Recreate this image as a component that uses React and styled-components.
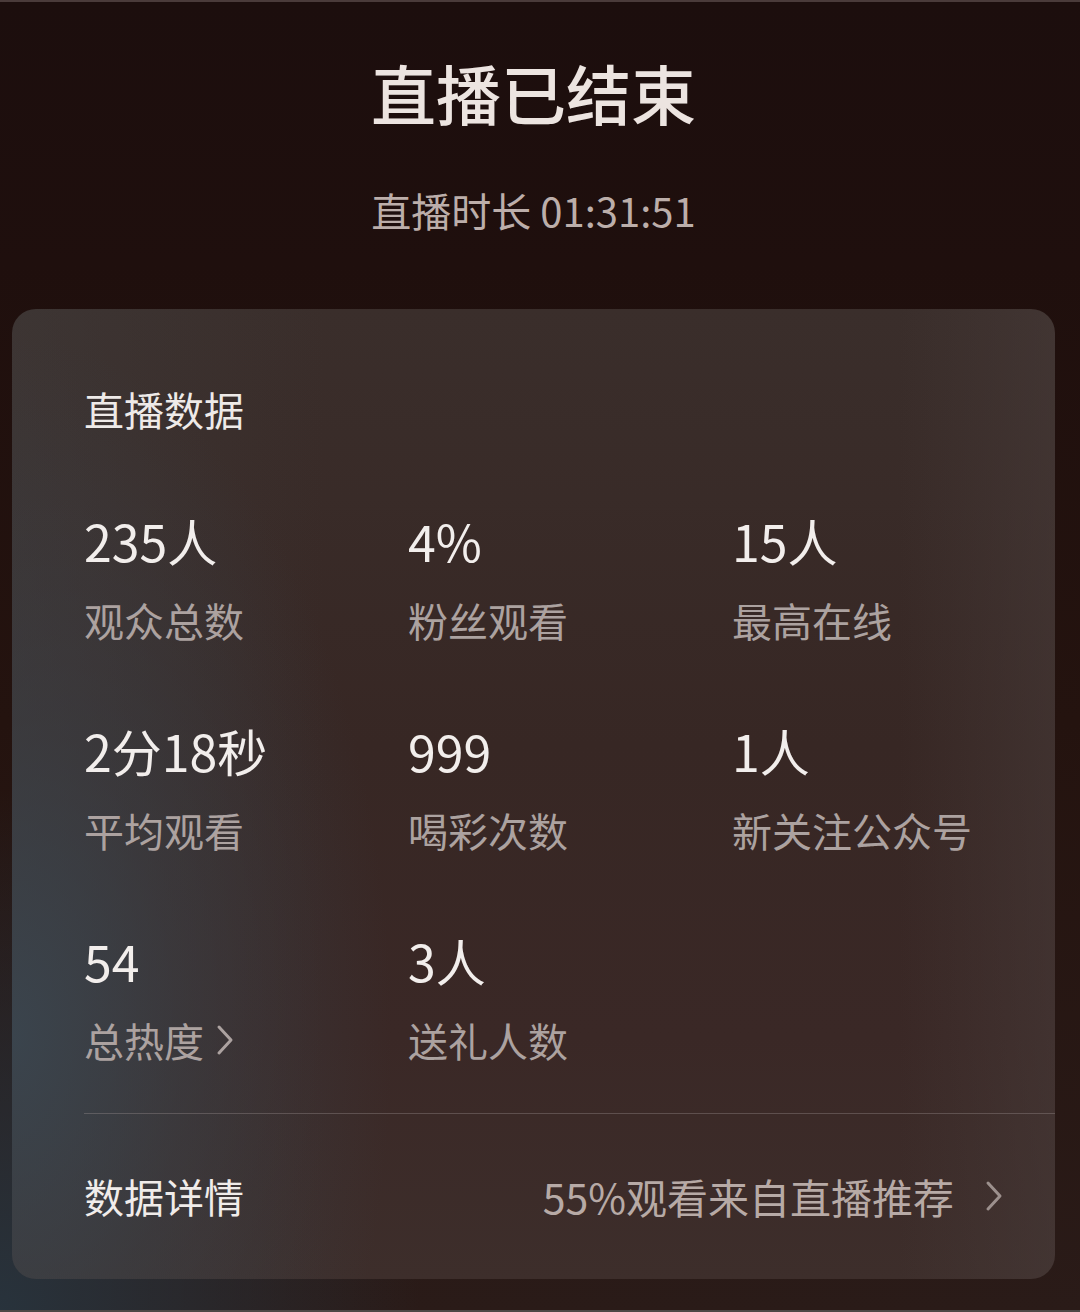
import React from "react";
import styled, { createGlobalStyle } from "styled-components";

const Global = createGlobalStyle`
  html, body { margin: 0; padding: 0; background: #1d0f0e; }
  body { font-family: "Noto Sans CJK SC", "Noto Sans", sans-serif; }
  * { box-sizing: border-box; }
`;

const Page = styled.div`
  width: 1080px;
  height: 1312px;
  overflow: hidden;
  display: flex;
  flex-direction: column;
  align-items: center;
  padding: 58px 25px 0 12px;
  border-top: 2px solid #4a3b3a;
  border-bottom: 2px solid #4e4846;
  background:
    radial-gradient(ellipse 420px 520px at 0% 100%, rgba(40, 52, 62, 0.95), rgba(40, 52, 62, 0) 100%),
    linear-gradient(180deg, #1c0e0d 0%, #1f0f0d 20%, #24130f 55%, #2a1b18 100%);
`;

const Title = styled.h1`
  margin: 0;
  font-size: 65px;
  line-height: 64px;
  font-weight: 500;
  color: #ece4e0;
`;

const Duration = styled.div`
  margin-top: 66px;
  font-size: 40px;
  line-height: 40px;
  color: #bcaeaa;
`;

const Card = styled.section`
  margin-top: 79px;
  width: 1043px;
  height: 970px;
  border-radius: 24px;
  padding: 80px 0 0 72px;
  display: flex;
  flex-direction: column;
  background:
    radial-gradient(ellipse 380px 700px at 0% 75%, rgba(58, 70, 80, 0.9) 0%, rgba(58, 66, 74, 0.5) 45%, rgba(58, 60, 64, 0) 100%),
    linear-gradient(90deg, rgba(64, 62, 62, 0.45) 0%, rgba(60, 50, 48, 0) 30%, rgba(60, 50, 48, 0) 85%, rgba(72, 60, 58, 0.5) 100%),
    linear-gradient(180deg, #3a2e2b 0%, #372724 45%, #3a2826 75%, #3d2e2b 100%);
`;

const SectionTitle = styled.h2`
  margin: 0;
  font-size: 40px;
  line-height: 40px;
  font-weight: 400;
  color: #eeeae8;
`;

const Grid = styled.div`
  margin-top: 88px;
  display: grid;
  grid-template-columns: repeat(3, 324px);
  row-gap: 87px;
`;

const Stat = styled.div`
  display: flex;
  flex-direction: column;
`;

const Value = styled.div`
  font-size: 50px;
  line-height: 46px;
  color: #f2eeec;
  font-weight: 400;
  white-space: nowrap;
`;

const Label = styled.div`
  margin-top: 37px;
  font-size: 40px;
  line-height: 40px;
  color: #aca2a0;
  display: flex;
  align-items: center;
  gap: 12px;
`;

const Divider = styled.div`
  margin-top: 53px;
  height: 1px;
  background: rgba(160, 150, 148, 0.35);
`;

const Footer = styled.div`
  margin-top: 62px;
  display: flex;
  align-items: center;
  justify-content: space-between;
  padding-right: 52px;
`;

const FooterTitle = styled.div`
  font-size: 40px;
  line-height: 40px;
  color: #f0ecea;
`;

const FooterLink = styled.div`
  display: flex;
  align-items: center;
  gap: 31px;
  font-size: 41px;
  line-height: 40px;
  color: #b7aaa6;
`;

const Chevron = ({ color = "#aca2a0", w = 18, h = 32 }) => (
  <svg width={w} height={h} viewBox="0 0 18 32" fill="none">
    <path d="M3 3 L15 16 L3 29" stroke={color} strokeWidth="3" strokeLinecap="round" strokeLinejoin="round" />
  </svg>
);

const stats = [
  { value: "235人", label: "观众总数" },
  { value: "4%", label: "粉丝观看" },
  { value: "15人", label: "最高在线" },
  { value: "2分18秒", label: "平均观看" },
  { value: "999", label: "喝彩次数" },
  { value: "1人", label: "新关注公众号" },
  { value: "54", label: "总热度", arrow: true },
  { value: "3人", label: "送礼人数" },
];

export default function App() {
  return (
    <>
      <Global />
      <Page>
        <Title>直播已结束</Title>
        <Duration>直播时长 01:31:51</Duration>
        <Card>
          <SectionTitle>直播数据</SectionTitle>
          <Grid>
            {stats.map((s) => (
              <Stat key={s.label}>
                <Value>{s.value}</Value>
                <Label>
                  {s.label}
                  {s.arrow && <Chevron w={18} h={32} />}
                </Label>
              </Stat>
            ))}
          </Grid>
          <Divider />
          <Footer>
            <FooterTitle>数据详情</FooterTitle>
            <FooterLink>
              55%观看来自直播推荐
              <Chevron color="#9c908d" />
            </FooterLink>
          </Footer>
        </Card>
      </Page>
    </>
  );
}
